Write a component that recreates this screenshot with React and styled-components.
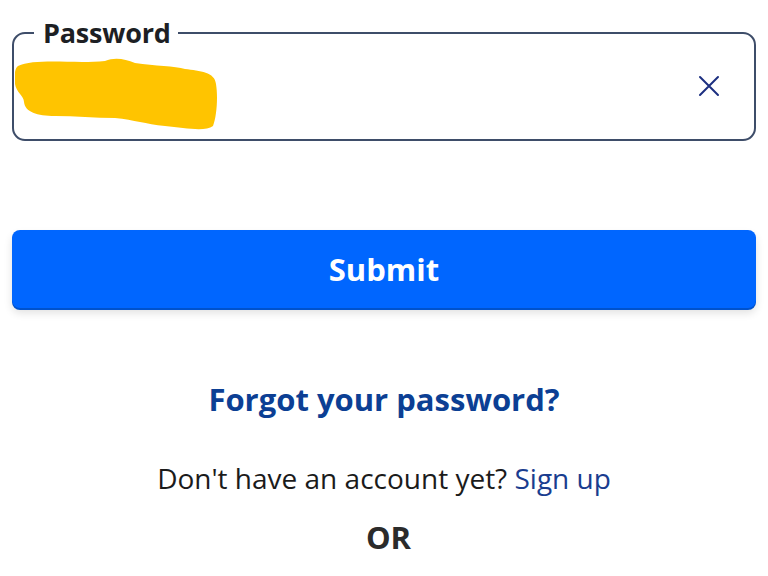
import React from "react";
import styled, { createGlobalStyle } from "styled-components";

const Global = createGlobalStyle`
  html, body { margin: 0; padding: 0; background: #fff; }
  body { font-family: "Open Sans", "Noto Sans", sans-serif; }
`;

const Page = styled.div`
  width: 768px;
  height: 576px;
  overflow: hidden;
  padding: 0 12px;
  box-sizing: border-box;
  display: flex;
  flex-direction: column;
`;

const Field = styled.fieldset`
  margin: 18px 0 0 0;
  padding: 0 2px 0 1px;
  border: 2px solid #3e4d69;
  border-radius: 13px;
  height: 123px;
  box-sizing: border-box;
  min-width: 0;
`;

const Legend = styled.legend`
  margin-left: 19px;
  padding: 0 7px 0 9px;
  font-weight: 700;
  font-size: 27px;
  line-height: 30px;
  letter-spacing: -0.2px;
  color: #1d1f24;
`;

const InputRow = styled.div`
  display: flex;
  align-items: flex-start;
  justify-content: space-between;
`;

const Scribble = styled.svg`
  display: block;
  width: 204px;
  height: 76px;
  margin-top: 8px;
`;

const ClearButton = styled.button`
  border: 0;
  background: none;
  padding: 0;
  margin-right: 30px;
  margin-top: 25px;
  width: 26px;
  height: 26px;
  display: flex;
  align-items: center;
  justify-content: center;
  cursor: pointer;
`;

const Submit = styled.button`
  margin-top: 89px;
  height: 78px;
  border: 0;
  border-radius: 8px;
  background: #0066ff;
  color: #fff;
  font-family: "Open Sans", "Noto Sans", sans-serif;
  font-weight: 700;
  font-size: 31px;
  box-shadow: 0 2px 0 #0052cc, 0 5px 8px rgba(0, 0, 0, 0.12);
  cursor: pointer;
`;

const Forgot = styled.a`
  margin-top: 69px;
  align-self: center;
  font-weight: 700;
  font-size: 31px;
  line-height: 44px;
  color: #0c3f94;
  text-decoration: none;
`;

const SignupLine = styled.p`
  margin: 37px 0 0 0;
  text-align: center;
  font-size: 28px;
  line-height: 40px;
  color: #1b1b1b;
`;

const SignupLink = styled.a`
  color: #1a3d8f;
  text-decoration: none;
`;

const Or = styled.div`
  margin-top: 19px;
  padding-left: 9px;
  text-align: center;
  font-weight: 700;
  font-size: 31px;
  line-height: 40px;
  color: #2b2b2b;
`;

export default function App() {
  return (
    <>
      <Global />
      <Page>
        <Field>
          <Legend>Password</Legend>
          <InputRow>
            <Scribble viewBox="0 0 204 76" aria-hidden="true">
              <path
                d="M3 10 C 20 2, 60 8, 90 5 C 100 1, 110 3, 120 7 C 140 10, 160 10, 170 13 C 185 15, 200 16, 201 28 C 203 40, 202 60, 198 70 C 190 76, 170 72, 150 70 C 130 68, 120 64, 100 62 C 80 62, 60 60, 40 60 C 22 60, 10 56, 9 46 C 9 40, 1 36, 0 28 C -1 18, 0 12, 3 10 Z"
                fill="#ffc400"
              />
            </Scribble>
            <ClearButton aria-label="Clear">
              <svg width="22" height="22" viewBox="0 0 22 22">
                <path d="M2 2 L20 20 M20 2 L2 20" stroke="#1c2f80" strokeWidth="2" strokeLinecap="round" />
              </svg>
            </ClearButton>
          </InputRow>
        </Field>
        <Submit>Submit</Submit>
        <Forgot href="#">Forgot your password?</Forgot>
        <SignupLine>
          Don't have an account yet? <SignupLink href="#">Sign up</SignupLink>
        </SignupLine>
        <Or>OR</Or>
      </Page>
    </>
  );
}
